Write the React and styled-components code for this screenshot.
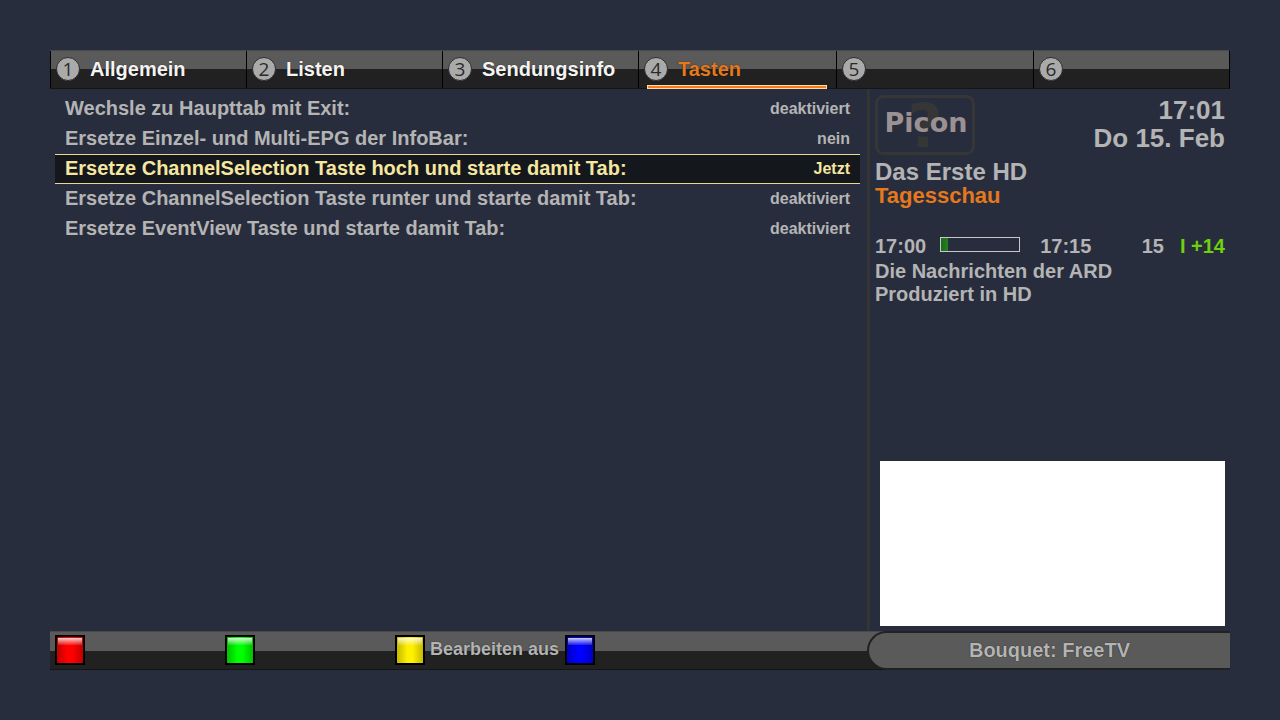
import React, { useState } from 'react';
import styled, { createGlobalStyle, css } from 'styled-components';

const GlobalStyle = createGlobalStyle`
  *,
  *::before,
  *::after {
    box-sizing: border-box;
  }

  body {
    margin: 0;
    background: #282d3d;
    color: #b4b4b4;
    font-family: 'Liberation Sans', Arial, sans-serif;
    font-weight: bold;
    font-size: 20px;
  }

  button {
    font: inherit;
    color: inherit;
    cursor: pointer;
  }
`;

const barBackground = css`
  background: linear-gradient(#5a5a5a 50%, #212121 50%);
  border-top: 1px solid #4a4a4a;
  border-bottom: 1px solid #151515;
`;

const Screen = styled.div`
  display: flex;
  flex-direction: column;
  min-height: 100vh;
  padding: 50px;
`;

const TabBar = styled.nav`
  ${barBackground}
  display: grid;
  grid-template-columns: 196fr 196fr 196fr 198fr 197fr 196fr;
  height: 39px;
  border-right: 1px solid #000;
`;

const Tab = styled.button`
  display: flex;
  align-items: center;
  gap: 9px;
  position: relative;
  min-width: 0;
  padding: 0 0 0 6px;
  border: 0;
  border-left: 1px solid #000;
  background: none;
  color: ${({ $active }) => ($active ? '#e4781c' : '#f4f4f4')};
  text-shadow: 0 0 1px #111;

  ${({ $active }) =>
    $active &&
    css`
      &::after {
        content: '';
        position: absolute;
        left: 8px;
        right: 9px;
        bottom: -1px;
        height: 4px;
        background: #f07d1c;
        border: 1px solid #ffd9a8;
      }
    `}
`;

const TabNumber = styled.svg`
  flex: none;
  width: 24px;
  height: 24px;
  overflow: visible;

  circle {
    fill: #aaa;
    stroke: #2c2c2c;
  }

  text {
    fill: #2a2a2a;
    font: 400 19px 'Open Sans', sans-serif;
    text-anchor: middle;
    text-shadow: none;
  }
`;

const Content = styled.main`
  display: flex;
  flex: 1;
`;

const SettingList = styled.ul`
  flex: 1;
  min-width: 0;
  margin: 0;
  padding: 5px 7px 0 5px;
  list-style: none;
`;

const Setting = styled.li`
  display: flex;
  justify-content: space-between;
  height: 30px;
  padding: 0 10px;
  border: solid transparent;
  border-width: 1px 0;
  line-height: 26px;

  ${({ $selected }) =>
    $selected &&
    css`
      background: #14171b;
      border-color: #e8d896;
      color: #f5e6a0;
    `}
`;

const SettingValue = styled.span`
  font-size: 16px;
  line-height: 28px;
`;

const Sidebar = styled.aside`
  display: flex;
  flex-direction: column;
  width: 363px;
  padding: 6px 5px 5px;
  border-left: 3px solid #343434;
`;

const SidebarTop = styled.div`
  display: flex;
  justify-content: space-between;
  margin-bottom: 5px;
`;

const Picon = styled.svg`
  width: 100px;
  height: 60px;
  overflow: visible;

  rect {
    fill: none;
    stroke: #363636;
    stroke-width: 3px;
  }

  text {
    font-family: 'DejaVu Sans', sans-serif;
    font-weight: bold;
    text-anchor: middle;
  }
`;

const Clock = styled.div`
  padding-top: 1px;
  font-size: 26px;
  line-height: 28px;
  text-align: right;
`;

const Channel = styled.div`
  font-size: 24px;
  line-height: 24px;
`;

const EventTitle = styled(Channel)`
  color: #e4781c;
  font-size: 22px;
`;

const Timing = styled.div`
  display: flex;
  align-items: flex-start;
  margin-top: 26px;
  line-height: 24px;
`;

const Progress = styled.div`
  width: 80px;
  height: 15px;
  margin: 3px 20px 0 14px;
  border: 1px solid #c8c8c8;
`;

const ProgressFill = styled.div`
  height: 100%;
  background: linear-gradient(90deg, #1a6a1a, #24801c);
`;

const Duration = styled.span`
  margin-left: auto;
`;

const Remaining = styled.span`
  margin-left: 16px;
  color: #6dd20c;
`;

const Description = styled.p`
  margin: 2px 0 0;
  line-height: 23px;
`;

const VideoPreview = styled.div`
  height: 165px;
  margin: auto 0 0 5px;
  background: #fff;
`;

const Footer = styled.footer`
  ${barBackground}
  display: flex;
  height: 39px;
`;

const KeyList = styled.div`
  display: grid;
  grid-template-columns: repeat(4, 170px);
  flex: 1;
  min-width: 0;
  padding: 0 0 2px 5px;
`;

const Key = styled.button`
  display: flex;
  align-items: center;
  gap: 5px;
  padding: 0;
  border: 0;
  background: none;
  font-size: 18px;
  white-space: nowrap;
  text-shadow: 0 0 1px #111;
`;

const KeyColor = styled.span`
  flex: none;
  width: 30px;
  height: 30px;
  padding: 1px;
  border: 2px solid #000;
  background: ${({ $light, $dark }) => `linear-gradient(90deg, ${$dark}, ${$light} 40%, ${$light} 60%, ${$dark})`};

  &::before {
    content: '';
    display: block;
    height: 7px;
    background: linear-gradient(rgba(255, 255, 255, 0.8), rgba(255, 255, 255, 0.1));
  }
`;

const Bouquet = styled.div`
  width: 363px;
  margin: -1px 0;
  border: 2px solid #212121;
  border-right: 0;
  border-radius: 20px 0 0 20px;
  background: #5a5a5a;
  line-height: 35px;
  text-align: center;
  text-shadow: 0 0 1px #111;
`;

const tabs = ['Allgemein', 'Listen', 'Sendungsinfo', 'Tasten', '', ''];

const settings = [
  { label: 'Wechsle zu Haupttab mit Exit:', value: 'deaktiviert' },
  { label: 'Ersetze Einzel- und Multi-EPG der InfoBar:', value: 'nein' },
  { label: 'Ersetze ChannelSelection Taste hoch und starte damit Tab:', value: 'Jetzt' },
  { label: 'Ersetze ChannelSelection Taste runter und starte damit Tab:', value: 'deaktiviert' },
  { label: 'Ersetze EventView Taste und starte damit Tab:', value: 'deaktiviert' },
];

const keys = [
  { name: 'Rot', light: '#ff0000', dark: '#c00000' },
  { name: 'Grün', light: '#00ff00', dark: '#00c000' },
  { name: 'Gelb', light: '#fff000', dark: '#c4b800', text: 'Bearbeiten aus' },
  { name: 'Blau', light: '#0000ff', dark: '#0000c0' },
];

// minutes for the label, seconds for the bar
const duration = 15;
const elapsedSeconds = 80;

const App = () => {
  const [activeTab, setActiveTab] = useState(3);
  const [selected, setSelected] = useState(2);

  return (
    <Screen>
      <GlobalStyle />
      <TabBar>
        {tabs.map((title, i) => (
          <Tab
            key={i}
            type="button"
            aria-label={title || `Tab ${i + 1}`}
            $active={i === activeTab}
            onClick={() => setActiveTab(i)}
          >
            <TabNumber viewBox="0 0 24 24">
              <circle cx="11" cy="11" r="11.5" />
              <text x="11" y="18">{i + 1}</text>
            </TabNumber>
            {title}
          </Tab>
        ))}
      </TabBar>
      <Content>
        <SettingList>
          {settings.map(({ label, value }, i) => (
            <Setting key={label} $selected={i === selected} onClick={() => setSelected(i)}>
              <span>{label}</span>
              <SettingValue>{value}</SettingValue>
            </Setting>
          ))}
        </SettingList>
        <Sidebar>
          <SidebarTop>
            <Picon viewBox="0 0 100 60">
              <rect x="1.5" y="1.5" width="97" height="57" rx="7" />
              <text x="50" y="52" fontSize="60" fill="#363636">?</text>
              <text x="51" y="37" fontSize="27" fill="#9b9193">Picon</text>
            </Picon>
            <Clock>
              <div>17:01</div>
              <div>Do 15. Feb</div>
            </Clock>
          </SidebarTop>
          <Channel>Das Erste HD</Channel>
          <EventTitle>Tagesschau</EventTitle>
          <Timing>
            <span>17:00</span>
            <Progress
              role="progressbar"
              aria-label="Tagesschau"
              aria-valuenow={elapsedSeconds}
              aria-valuemax={duration * 60}
            >
              <ProgressFill style={{ width: `${(elapsedSeconds / (duration * 60)) * 100}%` }} />
            </Progress>
            <span>17:15</span>
            <Duration>{duration}</Duration>
            <Remaining>I +14</Remaining>
          </Timing>
          <Description>
            Die Nachrichten der ARD
            <br />
            Produziert in HD
          </Description>
          <VideoPreview />
        </Sidebar>
      </Content>
      <Footer>
        <KeyList>
          {keys.map(({ name, light, dark, text }) => (
            <Key key={name} type="button" aria-label={text || name}>
              <KeyColor $light={light} $dark={dark} />
              {text}
            </Key>
          ))}
        </KeyList>
        <Bouquet>Bouquet: FreeTV</Bouquet>
      </Footer>
    </Screen>
  );
};

export default App;
